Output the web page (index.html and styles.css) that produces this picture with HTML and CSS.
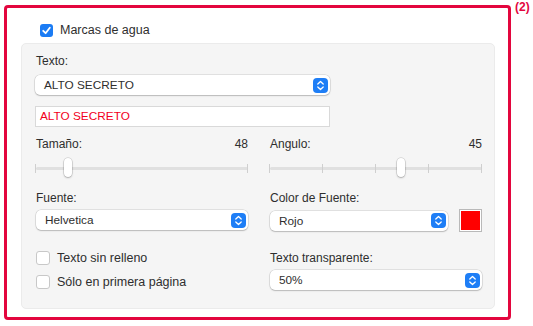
FILE: index.html
```html
<!DOCTYPE html>
<html>
<head>
  <title>Marcas de agua</title>
  <link rel="stylesheet" href="styles.css">
</head>
<body>
  <div class="frame">
    <label class="check-row top-check">
      <span class="box checked">
        <svg width="13" height="13" viewBox="0 0 13 13"><path d="M3.2 6.8 L5.6 9.2 L9.8 3.8" fill="none" stroke="#fff" stroke-width="1.8" stroke-linecap="round" stroke-linejoin="round"/></svg>
      </span>
      <span>Marcas de agua</span>
    </label>

    <div class="panel">
      <div class="label">Texto:</div>
      <div class="select wide">
        <span>ALTO SECRETO</span>
        <span class="stepper">
          <svg width="15" height="15" viewBox="0 0 15 15"><path d="M4.8 6 L7.5 3.5 L10.2 6 M4.8 9 L7.5 11.5 L10.2 9" fill="none" stroke="#fff" stroke-width="1.3" stroke-linecap="round" stroke-linejoin="round"/></svg>
        </span>
      </div>
      <div class="text-input">ALTO SECRETO</div>

      <div class="cols">
        <div class="col">
          <div class="label split"><span>Tamaño:</span><span>48</span></div>
          <div class="slider">
            <div class="track"></div>
            <span class="tick" style="left: 0%"></span>
            <span class="tick" style="left: 100%"></span>
            <span class="thumb" style="left: 15%"></span>
          </div>
        </div>
        <div class="col">
          <div class="label split"><span>Angulo:</span><span>45</span></div>
          <div class="slider">
            <div class="track"></div>
            <span class="tick" style="left: 0%"></span>
            <span class="tick" style="left: 25%"></span>
            <span class="tick" style="left: 50%"></span>
            <span class="tick" style="left: 75%"></span>
            <span class="tick" style="left: 100%"></span>
            <span class="thumb" style="left: 62%"></span>
          </div>
        </div>

        <div class="col">
          <div class="label">Fuente:</div>
          <div class="select tight">
            <span>Helvetica</span>
            <span class="stepper">
              <svg width="15" height="15" viewBox="0 0 15 15"><path d="M4.8 6 L7.5 3.5 L10.2 6 M4.8 9 L7.5 11.5 L10.2 9" fill="none" stroke="#fff" stroke-width="1.3" stroke-linecap="round" stroke-linejoin="round"/></svg>
            </span>
          </div>
        </div>
        <div class="col">
          <div class="label">Color de Fuente:</div>
          <div class="color-row">
            <div class="select grow">
              <span>Rojo</span>
              <span class="stepper">
                <svg width="15" height="15" viewBox="0 0 15 15"><path d="M4.8 6 L7.5 3.5 L10.2 6 M4.8 9 L7.5 11.5 L10.2 9" fill="none" stroke="#fff" stroke-width="1.3" stroke-linecap="round" stroke-linejoin="round"/></svg>
              </span>
            </div>
            <div class="swatch"><div class="swatch-fill"></div></div>
          </div>
        </div>

        <div class="col checks">
          <label class="check-row"><span class="box"></span><span>Texto sin relleno</span></label>
          <label class="check-row"><span class="box"></span><span>Sólo en primera página</span></label>
        </div>
        <div class="col bottom-right">
          <div class="label">Texto transparente:</div>
          <div class="select tight">
            <span>50%</span>
            <span class="stepper">
              <svg width="15" height="15" viewBox="0 0 15 15"><path d="M4.8 6 L7.5 3.5 L10.2 6 M4.8 9 L7.5 11.5 L10.2 9" fill="none" stroke="#fff" stroke-width="1.3" stroke-linecap="round" stroke-linejoin="round"/></svg>
            </span>
          </div>
        </div>
      </div>
    </div>
  </div>
  <div class="tag">(2)</div>
</body>
</html>
```

FILE: styles.css
```css
body {
  margin: 0;
  font-family: "Liberation Sans", Arial, sans-serif;
  font-size: 12px;
  color: #2e2e2e;
  background-color: #fff;
  display: flex;
  align-items: flex-start;
}

.frame {
  margin: 5px 0 0 4px;
  box-sizing: border-box;
  width: 507px;
  height: 315px;
  border: 3px solid #e3063e;
  border-radius: 4px;
  padding: 15px 13px 8px 14px;
  display: flex;
  flex-direction: column;
}

.tag {
  margin-left: 4px;
  font-weight: bold;
  font-size: 12px;
  color: #e3063e;
  line-height: 15px;
}

.check-row {
  display: flex;
  align-items: center;
  gap: 7px;
  height: 14px;
  font-size: 12.5px;
}

.top-check {
  margin-left: 19px;
}

.box {
  width: 12px;
  height: 12px;
  border: 1px solid #c8c8c8;
  border-radius: 3px;
  background-color: #fff;
  flex-shrink: 0;
}

.box.checked {
  width: 13px;
  height: 13px;
  border: none;
  background-color: #1b7cf4;
  display: flex;
}

.panel {
  margin-top: 6px;
  flex: 1;
  background-color: #f5f5f5;
  border: 1px solid #ebebeb;
  border-radius: 5px;
  padding: 9px 12px 0 14px;
}

.label {
  line-height: 16px;
  height: 16px;
}

.split {
  display: flex;
  justify-content: space-between;
}

.select {
  margin-top: 6px;
  height: 20px;
  background-color: #fff;
  border-radius: 5px;
  box-shadow: 0 0 0 0.5px rgba(0, 0, 0, 0.16), 0 1px 1.5px rgba(0, 0, 0, 0.18);
  display: flex;
  align-items: center;
  justify-content: space-between;
  padding: 0 2px 0 9px;
  font-size: 11.8px;
}

.select.tight {
  margin-top: 4px;
}

.select.wide {
  width: 295px;
  margin-left: -1px;
  box-sizing: border-box;
}

.stepper {
  width: 15px;
  height: 15px;
  border-radius: 4px;
  background-color: #1e7ef6;
  display: flex;
}

.text-input {
  margin-top: 11px;
  margin-left: -1px;
  width: 295px;
  height: 21px;
  box-sizing: border-box;
  background-color: #fff;
  border: 1px solid #d9d9d9;
  color: #f2001c;
  font-size: 11.8px;
  line-height: 19px;
  padding-left: 4px;
}

.cols {
  margin-top: 9px;
  display: grid;
  grid-template-columns: 212px 212px;
  column-gap: 22px;
}

.slider {
  position: relative;
  height: 24px;
  margin-top: 4px;
  margin-bottom: 10px;
}

.track {
  position: absolute;
  left: 0;
  right: 0;
  top: 11px;
  height: 3px;
  background-color: #e0e0e0;
  border-radius: 2px;
}

.tick {
  position: absolute;
  top: 8px;
  width: 1px;
  height: 9px;
  margin-left: -1px;
  background-color: #cfcfcf;
}

.thumb {
  position: absolute;
  top: 2px;
  width: 8px;
  height: 19px;
  margin-left: -4px;
  background-color: #fff;
  border-radius: 4px;
  box-shadow: 0 0 0 0.5px rgba(0, 0, 0, 0.2), 0 1px 2px rgba(0, 0, 0, 0.22);
}

.color-row {
  margin-top: 3px;
  display: flex;
  align-items: center;
  gap: 11px;
}

.select.grow {
  flex: 1;
  margin-top: 0;
}

.swatch {
  width: 23px;
  height: 23px;
  box-sizing: border-box;
  border: 1px solid #b9b9b9;
  padding: 1px;
  background-color: #fff;
}

.swatch-fill {
  width: 100%;
  height: 100%;
  background-color: #ff0000;
}

.checks {
  margin-top: 19px;
  display: flex;
  flex-direction: column;
  gap: 10px;
}

.bottom-right {
  margin-top: 18px;
}
```
